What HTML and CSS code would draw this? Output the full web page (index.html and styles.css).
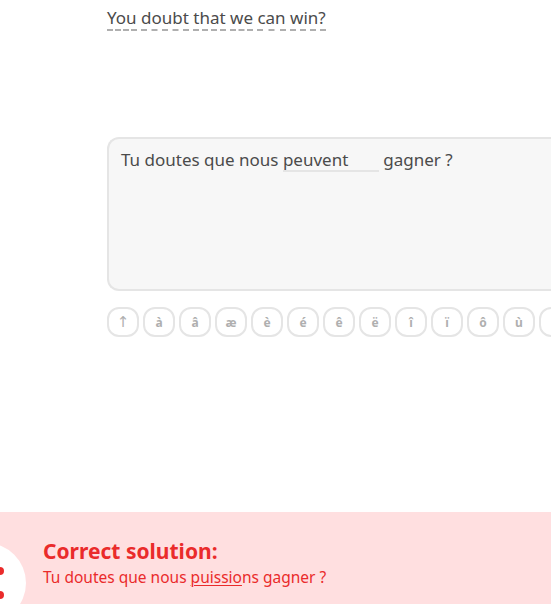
FILE: index.html
```html
<!DOCTYPE html>
<html>
<head>
<meta charset="utf-8">
<link rel="stylesheet" href="styles.css">
</head>
<body>
<div class="page">
  <div class="challenge">
    <div class="prompt">
      <span class="word">You</span> <span class="word">doubt</span> <span class="word">that</span> <span class="word">we</span> <span class="word">can</span> <span class="word">win?</span>
    </div>
    <div class="answer-box">
      <span class="line">Tu doutes que nous <span class="blank">peuvent</span> gagner ?</span>
    </div>
    <div class="keys">
      <button class="key arrow">↑</button>
      <button class="key">à</button>
      <button class="key">â</button>
      <button class="key">æ</button>
      <button class="key">è</button>
      <button class="key">é</button>
      <button class="key">ê</button>
      <button class="key">ë</button>
      <button class="key">î</button>
      <button class="key">ï</button>
      <button class="key">ô</button>
      <button class="key">ù</button>
      <button class="key">û</button>
    </div>
  </div>
  <div class="feedback">
    <div class="badge"><span class="dot dot1"></span><span class="dot dot2"></span></div>
    <div class="feedback-text">
      <div class="title">Correct solution:</div>
      <div class="solution">Tu doutes que nous <u>puissio</u>ns gagner ?</div>
    </div>
  </div>
</div>
</body>
</html>
```

FILE: styles.css
```css
html, body {
  margin: 0;
  padding: 0;
  background: #fff;
  overflow: hidden;
}
body {
  font-family: "Noto Sans", "DejaVu Sans", sans-serif;
  color: #3c3c3c;
  width: 551px;
  height: 604px;
}
.page {
  display: flex;
  flex-direction: column;
  height: 604px;
}
.challenge {
  padding-left: 107px;
  flex: 1;
  overflow: hidden;
}
.prompt {
  margin-top: 6px;
  font-size: 17px;
  line-height: 24px;
  color: #4b4b4b;
  white-space: nowrap;
}
.word {
  border-bottom: 2px dashed #afafaf;
  padding-bottom: 0;
}
.answer-box {
  margin-top: 107px;
  width: 460px;
  height: 150px;
  border: 2px solid #e5e5e5;
  border-right: none;
  border-radius: 12px 0 0 12px;
  background: #f7f7f7;
  box-sizing: content-box;
  padding: 0;
  font-size: 17px;
  color: #4b4b4b;
}
.line {
  display: block;
  padding: 10px 12px;
  line-height: 22px;
  white-space: nowrap;
}
.blank {
  display: inline-block;
  width: 96px;
  border-bottom: 2px solid #e5e5e5;
  line-height: 20px;
}
.keys {
  display: flex;
  gap: 4px;
  margin-top: 16px;
  white-space: nowrap;
}
.key {
  flex: none;
  width: 32px;
  height: 30px;
  border: 2px solid #e5e5e5;
  border-radius: 12px;
  background: #fff;
  color: #afafaf;
  font-family: "Noto Sans", sans-serif;
  font-weight: 700;
  font-size: 12px;
  padding: 0;
  display: flex;
  align-items: center;
  justify-content: center;
}
.key.arrow {
  font-family: "DejaVu Sans", sans-serif;
  font-weight: 400;
  font-size: 15px;
}
.feedback {
  height: 92px;
  background: #ffdfe0;
  position: relative;
  overflow: hidden;
  display: flex;
}
.badge {
  position: absolute;
  left: -54px;
  top: 31px;
  width: 80px;
  height: 80px;
  border-radius: 50%;
  background: #fff;
}
.dot {
  position: absolute;
  width: 8px;
  height: 8px;
  border-radius: 50%;
  background: #ea2b2b;
  left: 50px;
}
.dot1 { top: 24px; }
.dot2 { top: 48px; }
.feedback-text {
  padding-left: 43px;
  padding-top: 26px;
  color: #ea2b2b;
}
.title {
  font-size: 21px;
  font-weight: 700;
  line-height: 26px;
}
.solution {
  margin-top: 3px;
  font-size: 15.5px;
  line-height: 20px;
}
.solution u {
  text-decoration-thickness: 1px;
  text-underline-offset: 2px;
}
```
